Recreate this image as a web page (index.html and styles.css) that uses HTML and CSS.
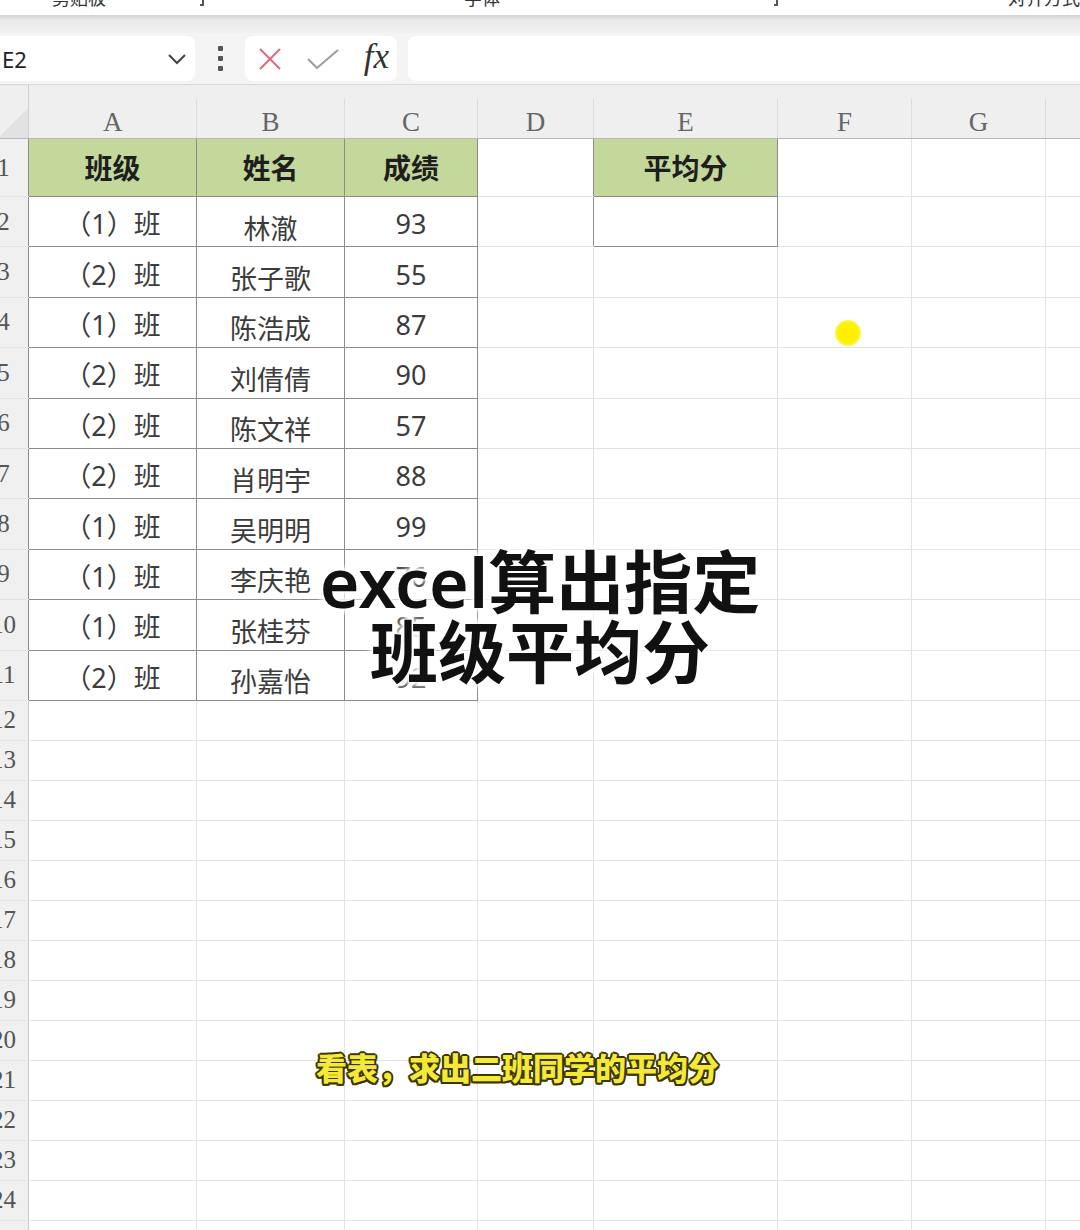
FILE: index.html
```html
<!DOCTYPE html>
<html lang="zh-CN">
<head>
  <meta charset="UTF-8">
  <title>excel算出指定班级平均分</title>
  <link rel="stylesheet" href="styles.css">
</head>
<body>

  <div class="ribbon">
    <span class="rb-label" style="margin-left:52px">剪贴板</span>
    <span class="rb-mark" style="margin-left:94px"></span>
    <span class="rb-label" style="margin-left:260px">字体</span>
    <span class="rb-mark" style="margin-left:274px"></span>
    <span class="rb-label" style="margin-left:230px">对齐方式</span>
  </div>
  <div class="ribbon-shade"></div>

  <div class="formula-bar">
    <div class="name-box">
      <span>E2</span>
      <svg width="20" height="12" viewBox="0 0 20 12">
        <polyline points="2,2 10,10 18,2" fill="none" stroke="#444" stroke-width="2"/>
      </svg>
    </div>
    <div class="bar-dots"><i></i><i></i><i></i></div>
    <div class="fx-tools">
      <svg width="26" height="26" viewBox="0 0 26 26">
        <line x1="3" y1="3" x2="23" y2="23" stroke="#e06a78" stroke-width="2"/>
        <line x1="23" y1="3" x2="3" y2="23" stroke="#e06a78" stroke-width="2"/>
      </svg>
      <svg width="34" height="24" viewBox="0 0 34 24">
        <polyline points="2,12 11,21 32,3" fill="none" stroke="#9c9c9c" stroke-width="2"/>
      </svg>
      <span class="fx">fx</span>
    </div>
    <div class="formula-input"></div>
  </div>

  <table class="sheet">
    <colgroup>
      <col style="width:50px">
      <col style="width:168px">
      <col style="width:148px">
      <col style="width:133px">
      <col style="width:116px">
      <col style="width:184px">
      <col style="width:134px">
      <col style="width:134px">
      <col style="width:120px">
    </colgroup>
    <thead>
      <tr>
        <th class="corner"></th>
        <th>A</th><th>B</th><th>C</th><th>D</th><th>E</th><th>F</th><th>G</th><th>H</th>
      </tr>
    </thead>
    <tbody id="sheetBody">
      <!-- rows are built by the script below -->
    </tbody>
  </table>

  <div class="title">excel算出指定<br>班级平均分</div>
  <div class="caption">看表，求出二班同学的平均分</div>
  <div class="cursor-dot"></div>

  <script>
    const data = [
      ["（1）班", "林澈", "93"],
      ["（2）班", "张子歌", "55"],
      ["（1）班", "陈浩成", "87"],
      ["（2）班", "刘倩倩", "90"],
      ["（2）班", "陈文祥", "57"],
      ["（2）班", "肖明宇", "88"],
      ["（1）班", "吴明明", "99"],
      ["（1）班", "李庆艳", "76"],
      ["（1）班", "张桂芬", "85"],
      ["（2）班", "孙嘉怡", "92"]
    ];
    const tbody = document.getElementById("sheetBody");

    for (let i = 1; i <= 25; i++) {
      const row = document.createElement("tr");
      let html = `<td class="rh${i <= 11 ? " dk-r" : ""}">${i}</td>`;

      if (i === 1) {
        row.className = "r-title";
        html += `<td class="hd">班级</td><td class="hd">姓名</td><td class="hd">成绩</td>
                 <td class="dk-r"></td><td class="hd">平均分</td>`;
      } else if (i <= 11) {
        const [cls, name, score] = data[i - 2];
        row.className = "r-data";
        html += `<td class="dk">${cls}</td><td class="dk name">${name}</td><td class="dk">${score}</td>`;
        html += i === 2 ? `<td class="dk-r"></td><td class="dk"></td>` : `<td></td><td></td>`;
      } else {
        row.className = "r-empty";
        html += `<td></td>`.repeat(5);
      }

      html += `<td></td>`.repeat(3);
      row.innerHTML = html;
      tbody.appendChild(row);
    }
  </script>

</body>
</html>
```

FILE: styles.css
```css
body {
  margin: 0;
  width: 1080px;
  height: 1230px;
  overflow: hidden;
  position: relative;
  background-color: #fff;
  font-family: "Noto Sans", "Noto Sans CJK SC", sans-serif;
  color: #333;
}

/* ribbon (cut off at the top) */
.ribbon {
  height: 15px;
  overflow: hidden;
  display: flex;
  align-items: flex-start;
  background-color: #fff;
}

.rb-label {
  font-size: 18px;
  line-height: 18px;
  margin-top: -11px;
  color: #333;
  white-space: nowrap;
}

.rb-mark {
  width: 8px;
  height: 8px;
  border-right: 2px solid #555;
  border-bottom: 2px solid #555;
  margin-top: -4px;
}

.ribbon-shade {
  height: 18px;
  background: linear-gradient(#d4d4d4, #e9e9e9 30%, #f1f1f1);
}

/* formula bar */
.formula-bar {
  height: 51px;
  display: flex;
  align-items: center;
  background-color: #f4f4f4;
}

.name-box {
  width: 203px;
  height: 45px;
  margin-left: -8px;
  padding: 0 8px 0 10px;
  box-sizing: border-box;
  background-color: #fff;
  border-radius: 8px;
  display: flex;
  align-items: center;
  justify-content: space-between;
  font-size: 22px;
  color: #222;
}

.bar-dots {
  width: 50px;
  display: flex;
  flex-direction: column;
  align-items: center;
  gap: 5px;
}

.bar-dots i {
  width: 5px;
  height: 5px;
  background-color: #555;
  border-radius: 1px;
}

.fx-tools {
  width: 152px;
  height: 45px;
  padding: 0 8px 0 12px;
  box-sizing: border-box;
  background-color: #fff;
  border-radius: 8px;
  display: flex;
  align-items: center;
  justify-content: space-between;
}

.fx {
  font-family: "Liberation Serif", serif;
  font-style: italic;
  font-size: 35px;
  color: #333;
  margin-top: -4px;
}

.formula-input {
  flex: 1;
  height: 45px;
  margin-left: 11px;
  margin-right: -10px;
  background-color: #fff;
  border-radius: 8px;
}

/* sheet grid */
.sheet {
  border-collapse: collapse;
  table-layout: fixed;
  width: 1187px;
  margin-left: -22px;
}

.sheet th {
  height: 53px;
  padding: 0;
  vertical-align: bottom;
  font-family: "Liberation Serif", serif;
  font-weight: normal;
  font-size: 27px;
  color: #666;
  background: linear-gradient(#dcdcdc, #dcdcdc) right bottom / 1px 39px no-repeat, #efefef;
  border-top: 1px solid #dadada;
  border-bottom: 1px solid #b8b8b8;
}

.sheet th.corner {
  background: linear-gradient(135deg, #efefef 70%, #e2e2e2 70%), #efefef;
  border-right: 1px solid #d0d0d0;
}

.sheet td {
  border: 1px solid #e3e3e3;
  padding: 0;
  text-align: center;
  font-size: 27px;
  line-height: 30px;
  color: #3c3c3c;
}

.r-title { height: 58px; }
.r-data { height: 50.4px; }
.r-empty { height: 40px; }

.r-data td {
  padding-top: 5px;
}

.sheet td.rh {
  padding-top: 0;
  background-color: #f0f0f0;
  font-family: "Liberation Serif", serif;
  font-size: 25px;
  color: #555;
  border-right-color: #c8c8c8;
}

.sheet td.dk {
  border-color: #8c8c8c;
}

.sheet td.dk-r {
  border-right-color: #8c8c8c;
}

.sheet td.hd {
  border-color: #8c8c8c;
  background-color: #c4d89c;
  font-weight: bold;
  font-size: 28px;
  color: #1e1e1e;
}

.sheet td.name {
  padding-top: 14px;
}

/* overlays */
.title {
  position: absolute;
  left: 0;
  right: 0;
  top: 547px;
  text-align: center;
  font-size: 68px;
  line-height: 70px;
  font-weight: 600;
  color: #111;
  text-shadow: 0 0 3px #fff, 0 0 3px #fff, 0 0 6px #fff, 0 0 6px #fff, 0 0 10px #fff, 0 0 10px #fff;
}

.caption {
  position: absolute;
  left: 316px;
  top: 1048px;
  font-size: 31px;
  line-height: 40px;
  font-weight: 900;
  color: #f4e838;
  text-shadow: 1.5px 1.5px 0 #3b3500, -1.5px -1.5px 0 #3b3500, 1.5px -1.5px 0 #3b3500,
               -1.5px 1.5px 0 #3b3500, 0 2px 0 #3b3500, 0 -2px 0 #3b3500, 2px 0 0 #3b3500, -2px 0 0 #3b3500;
}

.cursor-dot {
  position: absolute;
  left: 835px;
  top: 320px;
  width: 26px;
  height: 26px;
  border-radius: 50%;
  background: radial-gradient(circle, #fff000 55%, rgba(255, 240, 0, 0.4) 80%, rgba(255, 240, 0, 0) 100%);
}
```
